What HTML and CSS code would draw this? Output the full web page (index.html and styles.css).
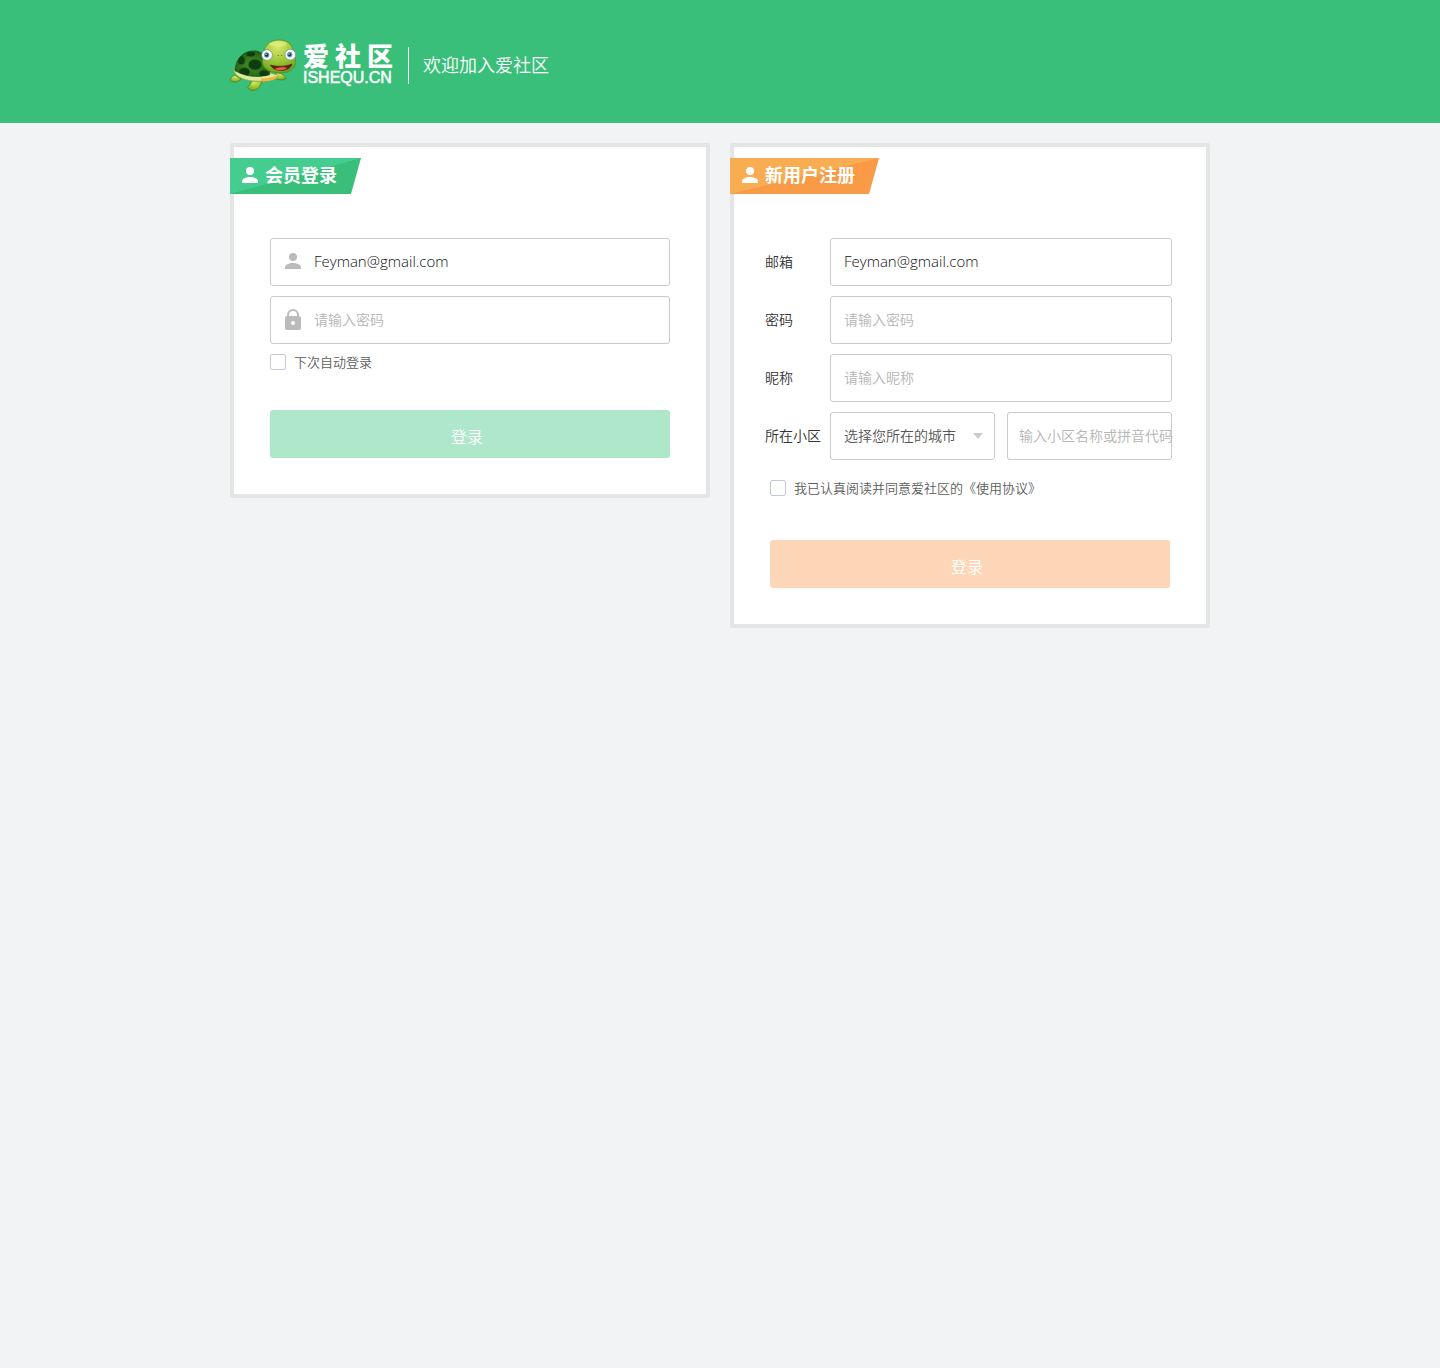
FILE: index.html
```html
<!DOCTYPE html>
<html lang="zh-CN">
<head>
<meta charset="utf-8">
<meta name="viewport" content="width=device-width, initial-scale=1">
<title>爱社区 - 登录与注册</title>
<link rel="stylesheet" href="styles.css">
</head>
<body>
<svg class="sprite" aria-hidden="true">
  <symbol id="icon-user" viewBox="0 0 16 16"><circle cx="8" cy="4" r="4"/><path d="M0 16v-1.500C0 11.500 4 10 8 10s8 1.500 8 4.500V16z"/></symbol>
  <symbol id="icon-lock" viewBox="0 0 16 21"><path fill-rule="evenodd" d="M2 7V6a6 6 0 0 1 12 0v1a2 2 0 0 1 2 2v10a2 2 0 0 1-2 2H2a2 2 0 0 1-2-2V9a2 2 0 0 1 2-2zm2 0h8V6a4 4 0 0 0-8 0zm4 5a2 2 0 1 0 0 4 2 2 0 0 0 0-4z"/></symbol>
</svg>

<header class="header">
  <div class="container brand">
    <a class="logo" href="#" aria-label="爱社区">
      <svg class="turtle" viewBox="15 28 201 156" aria-hidden="true">
        <defs>
          <radialGradient id="skin" cx=".45" cy=".2" r=".8"><stop offset="0" stop-color="#d9e86a"/><stop offset=".5" stop-color="#a5cb3c"/><stop offset="1" stop-color="#6fa51f"/></radialGradient>
          <radialGradient id="shell" cx=".5" cy=".55" r=".6"><stop offset="0" stop-color="#4f9424"/><stop offset="1" stop-color="#1d5813"/></radialGradient>
          <clipPath id="shell-clip"><path d="M30 122C33 82 60 61 92 64c28 4 43 28 42 71-38 10-76 6-104-13z"/></clipPath>
        </defs>
        <g stroke="#4c7d18" stroke-width="2">
          <path fill="url(#skin)" d="M30 137c-8 1-13 6-14 16 8 7 23 5 33-5z"/>
          <path fill="url(#skin)" d="M80 153c-2 10-8 15-12 20 8 15 35 14 43-19z"/>
          <path fill="url(#skin)" d="M145 140c8 11 24 14 38 7-3-10-12-17-28-17z"/>
        </g>
        <path fill="#dfe99a" stroke="#7b9c35" stroke-width="2" d="M27 116c-4 17 18 34 57 38 32 3 65-2 78-16l-30-10-100-2z"/>
        <path fill="#f3b13e" d="M108 147c24-2 42-6 54-12-3 12-25 22-54 20z"/>
        <path fill="url(#shell)" stroke="#164612" stroke-width="2" d="M30 122C33 82 60 61 92 64c28 4 43 28 42 71-38 10-76 6-104-13z"/>
        <g fill="#0d3c11" stroke="#267026" stroke-width="2" clip-path="url(#shell-clip)">
          <ellipse cx="77" cy="73" rx="14" ry="8"/><ellipse cx="49" cy="92" rx="11" ry="13"/><ellipse cx="90" cy="105" rx="20" ry="16"/><ellipse cx="58" cy="127" rx="17" ry="13"/><ellipse cx="117" cy="132" rx="15" ry="11"/><ellipse cx="122" cy="90" rx="9" ry="14"/>
        </g>
        <path fill="url(#skin)" stroke="#55871b" stroke-width="2" d="M162 31c29 0 43 17 45 43 13 30-2 54-34 55-34 2-61-9-61-33 0-6 2-10 3-16-2-28 18-49 47-49z"/>
        <ellipse cx="159" cy="43" rx="27" ry="8" fill="#e9f18b" opacity=".6"/>
        <g stroke="#668b8e" stroke-width="2"><circle cx="126" cy="76" r="16" fill="#fff"/><circle cx="196" cy="75" r="16" fill="#fff"/></g>
        <g fill="#173f54" stroke="#6ba7bd" stroke-width="3"><circle cx="125" cy="76" r="7"/><circle cx="194" cy="75" r="7"/></g>
        <circle cx="123" cy="74" r="2" fill="#fff"/><circle cx="192" cy="73" r="2" fill="#fff"/>
        <path d="M159 76l2 3m10-3l-2 3" stroke="#55791b" stroke-width="3"/>
        <path fill="#711914" stroke="#3b3310" stroke-width="2" d="M136 106c23 6 45 5 65-3-5 23-51 28-65 3z"/>
        <path fill="#ef5847" d="M150 117c9-5 28-6 37-2-11 8-26 9-37 2z"/>
      </svg>
      <span class="wordmark">
        <span class="wordmark-cn">爱社区</span>
        <span class="wordmark-en">ISHEQU.CN</span>
      </span>
    </a>
    <p class="welcome">欢迎加入爱社区</p>
  </div>
</header>

<main class="container panels">
  <section class="panel panel-login">
    <h2 class="ribbon"><svg class="icon-user"><use href="#icon-user"/></svg>会员登录</h2>
    <form class="form">
      <div class="field">
        <svg class="icon-user"><use href="#icon-user"/></svg>
        <input class="input" type="email" aria-label="邮箱" value="Feyman@gmail.com">
      </div>
      <div class="field">
        <svg class="icon-lock"><use href="#icon-lock"/></svg>
        <input class="input" type="password" aria-label="密码" placeholder="请输入密码">
      </div>
      <label class="check"><input type="checkbox">下次自动登录</label>
      <button class="submit" type="button">登录</button>
    </form>
  </section>

  <section class="panel panel-register">
    <h2 class="ribbon"><svg class="icon-user"><use href="#icon-user"/></svg>新用户注册</h2>
    <form class="form">
      <div class="row">
        <label for="email">邮箱</label>
        <div class="field"><input class="input" id="email" type="email" value="Feyman@gmail.com"></div>
      </div>
      <div class="row">
        <label for="password">密码</label>
        <div class="field"><input class="input" id="password" type="password" placeholder="请输入密码"></div>
      </div>
      <div class="row">
        <label for="nickname">昵称</label>
        <div class="field"><input class="input" id="nickname" type="text" placeholder="请输入昵称"></div>
      </div>
      <div class="row">
        <label for="city">所在小区</label>
        <div class="pair">
          <div class="field field-select">
            <select class="input" id="city"><option>选择您所在的城市</option></select>
          </div>
          <div class="field field-compact"><input class="input" type="text" aria-label="小区名称" placeholder="输入小区名称或拼音代码"></div>
        </div>
      </div>
      <label class="check"><input type="checkbox"><span>我已认真阅读并同意爱社区的<a href="#">《使用协议》</a></span></label>
      <button class="submit" type="button">登录</button>
    </form>
  </section>
</main>
</body>
</html>
```
FILE: styles.css
```css
* { box-sizing: border-box; }

body {
  margin: 0;
  background: #f1f3f5;
  color: #333;
  font: 350 14px/20px "Open Sans", "Noto Sans CJK SC", sans-serif;
}

a { color: inherit; text-decoration: none; }

.sprite { display: none; }

.container {
  max-width: 980px;
  margin: 0 auto;
}

/* Header */
.header {
  padding: 39px 0 32px;
  background: #39bf79;
  color: #fff;
}

.brand,
.logo {
  display: flex;
  align-items: center;
}

.logo { gap: 6px; }

.turtle {
  width: 67px;
  height: 52px;
}

.wordmark {
  display: flex;
  flex-direction: column;
  gap: 4px;
  width: 90px;
}

.wordmark-cn {
  font-size: 26px;
  font-weight: 900;
  line-height: 22px;
  text-align-last: justify;
}

.wordmark-en {
  font: 400 16px/14px "Liberation Sans", Arial, sans-serif;
  -webkit-text-stroke: 0.5px #fff;
}

.welcome {
  margin: 0 0 0 15px;
  padding-left: 14px;
  border-left: 1px solid #fff;
  font-size: 18px;
  line-height: 37px;
}

/* Panels */
.panels {
  display: grid;
  grid-template-columns: repeat(auto-fit, minmax(400px, 1fr));
  align-items: start;
  gap: 20px;
  padding: 20px 0;
}

.panel {
  padding: 11px 36px 36px;
  border: 4px solid #e4e5e5;
  border-radius: 2px;
  background: #fff;
}

.panel-login {
  --light: #45cd90;
  --dark: #39bf79;
  --button: #afe7ca;
}

.panel-register {
  --light: #f9ad53;
  --dark: #f89a46;
  --button: #fdd6b7;
}

.ribbon {
  display: flex;
  align-items: center;
  gap: 7px;
  width: fit-content;
  height: 36px;
  margin: 0 0 44px -40px;
  padding: 0 24px 2px 12px;
  background: linear-gradient(to bottom right, var(--light) 50%, var(--dark) 50%);
  clip-path: polygon(0 0, 100% 0, calc(100% - 10px) 100%, 0 100%);
  color: #fff;
  font-size: 18px;
  font-weight: 700;
}

.icon-user {
  flex: none;
  width: 16px;
  height: 16px;
  fill: currentColor;
}

.icon-lock {
  flex: none;
  width: 16px;
  height: 21px;
  fill: currentColor;
}

/* Forms */
.form {
  display: flex;
  flex-direction: column;
  gap: 10px;
}

.field {
  display: flex;
  align-items: center;
  gap: 13px;
  min-width: 0;
  height: 48px;
  padding: 0 0 2px 14px;
  border: 1px solid #c9cacb;
  border-radius: 3px;
  color: #bbb;
}

.panel-register .field { padding-left: 13px; }

.input {
  flex: 1;
  min-width: 0;
  height: 100%;
  padding: 0;
  border: 0;
  outline: 0;
  background: none;
  color: #333;
  font: inherit;
}

.input[type="email"] {
  color: #111;
  font-size: 15px;
}

.input::placeholder {
  color: #b5b5b5;
  opacity: 1;
}

.row {
  display: grid;
  grid-template-columns: 65px minmax(0, 1fr);
  align-items: center;
  margin: 0 -2px 0 -5px;
}

.pair {
  display: grid;
  grid-template-columns: repeat(2, minmax(0, 1fr));
  gap: 12px;
}

.panel-register .field-select {
  gap: 0;
  padding-right: 11px;
  padding-bottom: 0;
}

.field-select .input {
  appearance: none;
  color: #555;
}

.field-select::after {
  content: "";
  border: 5px solid transparent;
  border-top: 6px solid #c9cacb;
  border-bottom: 0;
}

.panel-register .field-compact { padding-left: 11px; }

/* The long hint runs up over the right edge of its box. */
.field-compact .input { margin-right: -4px; }

.check {
  display: flex;
  align-items: center;
  gap: 8px;
  height: 16px;
  color: #5c5c5c;
  font-size: 13px;
}

.panel-register .check { margin-top: 10px; }

.check input {
  appearance: none;
  flex: none;
  width: 16px;
  height: 16px;
  margin: 0;
  border: 1px solid #c5cad9;
  border-radius: 2px;
  background: #fff;
}

.check input:checked { background: var(--dark); }

.submit {
  height: 48px;
  margin-top: 30px;
  padding: 6px 6px 0 0;
  border: 0;
  border-radius: 3px;
  background: var(--button);
  color: #fff;
  font: inherit;
  font-size: 16px;
}

.panel-register .submit { margin-top: 34px; }
```
